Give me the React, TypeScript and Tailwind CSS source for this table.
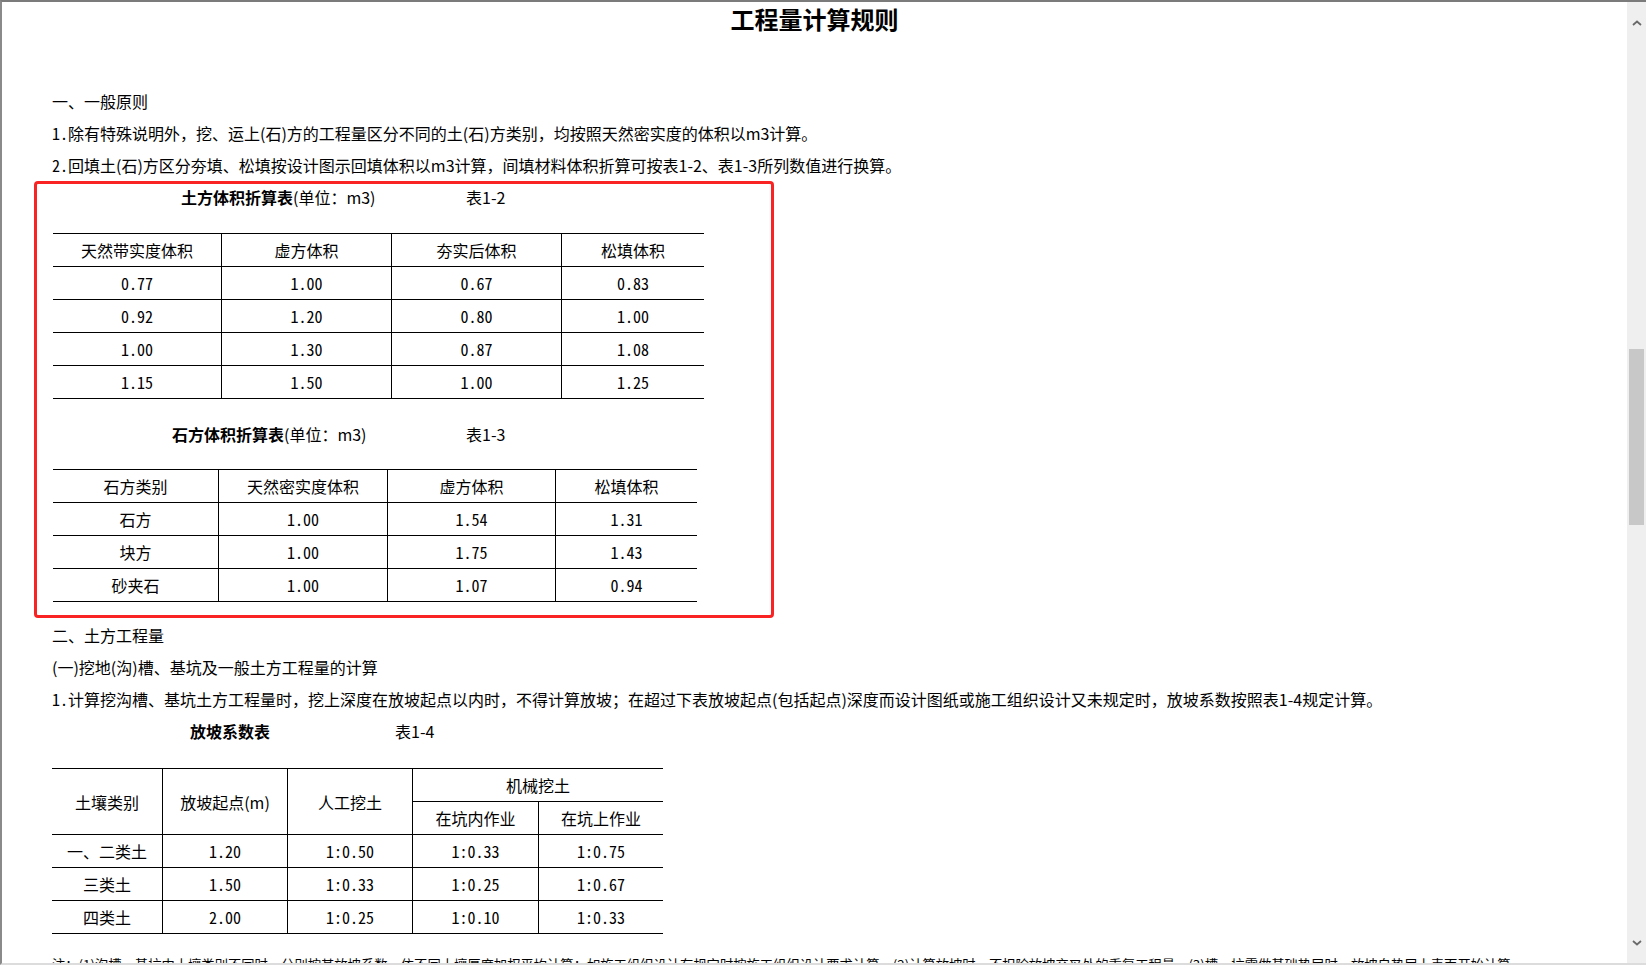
import React from "react";

type Cell = { text: string; w: string };

function TRow({ cells }: { cells: Cell[] }) {
  return (
    <div className="flex h-[33px] border-b border-black">
      {cells.map((c, i) => (
        <div
          key={i}
          className={
            c.w +
            " h-full flex items-center justify-center shrink-0" +
            (i > 0 ? " border-l border-black" : "") +
            (/^[0-9]/.test(c.text) ? " [font-feature-settings:'hwid']" : "")
          }
        >
          {c.text}
        </div>
      ))}
    </div>
  );
}

function SimpleTable({
  widths,
  tableW,
  header,
  rows,
}: {
  widths: string[];
  tableW: string;
  header: string[];
  rows: string[][];
}) {
  return (
    <div className={tableW + " border-t border-black"}>
      <TRow cells={header.map((t, i) => ({ text: t, w: widths[i] }))} />
      {rows.map((r, ri) => (
        <TRow key={ri} cells={r.map((t, i) => ({ text: t, w: widths[i] }))} />
      ))}
    </div>
  );
}

function Chevron({ up }: { up: boolean }) {
  return (
    <svg width="10" height="6" viewBox="0 0 10 6">
      <path
        d={up ? "M1 5 L5 1.5 L9 5" : "M1 1 L5 4.5 L9 1"}
        fill="none"
        stroke="#6a6a6a"
        strokeWidth="1.8"
      />
    </svg>
  );
}

export default function App() {
  const t1Widths = ["w-[168px]", "w-[170px]", "w-[170px]", "w-[143px]"];
  const t2Widths = ["w-[165px]", "w-[169px]", "w-[168px]", "w-[142px]"];
  const t3Widths = ["w-[110px]", "w-[125px]", "w-[125px]", "w-[126px]", "w-[125px]"];
  const hw = "[font-feature-settings:'hwid']";

  return (
    <div className="w-[1646px] h-[965px] bg-white border-t-2 border-l-2 border-b-2 border-t-[#7b7b7b] border-l-[#8a8a8a] border-b-[#dcdcdc] overflow-hidden flex text-black text-[16px] font-['Noto_Sans_CJK_SC',sans-serif]">
      <div className="flex-1 min-w-0 overflow-hidden">
        <div className="h-[34px] leading-[34px] text-center text-[24px] font-bold">工程量计算规则</div>

        <div className="mt-[50px] pl-[50px] h-[31px] leading-[31px]">一、一般原则</div>
        <div className="pl-[50px] h-[32px] leading-[32px] whitespace-nowrap">
          <span className={hw}>1.</span>除有特殊说明外，挖、运上(石)方的工程量区分不同的土(石)方类别，均按照天然密实度的体积以m3计算。
        </div>
        <div className="pl-[50px] h-[32px] leading-[32px] whitespace-nowrap">
          <span className={hw}>2.</span>回填土(石)方区分夯填、松填按设计图示回填体积以m3计算，间填材料体积折算可按表1-2、表1-3所列数值进行换算。
        </div>

        <div className="ml-[32px] w-[740px] h-[437px] border-[3px] border-[#fa2323] rounded-[4px]">
          <div className="h-[26px] leading-[26px] pl-[144px] flex whitespace-nowrap">
            <span className="w-[285px] shrink-0">
              <span className="font-bold">土方体积折算表</span>(单位：m3)
            </span>
            <span>表1-2</span>
          </div>
          <div className="mt-[23px] ml-[16px]">
            <SimpleTable
              widths={t1Widths}
              tableW="w-[651px]"
              header={["天然带实度体积", "虚方体积", "夯实后体积", "松填体积"]}
              rows={[
                ["0.77", "1.00", "0.67", "0.83"],
                ["0.92", "1.20", "0.80", "1.00"],
                ["1.00", "1.30", "0.87", "1.08"],
                ["1.15", "1.50", "1.00", "1.25"],
              ]}
            />
          </div>

          <div className="mt-[22px] h-[26px] leading-[26px] pl-[135px] flex whitespace-nowrap">
            <span className="w-[294px] shrink-0">
              <span className="font-bold">石方体积折算表</span>(单位：m3)
            </span>
            <span>表1-3</span>
          </div>
          <div className="mt-[22px] ml-[16px]">
            <SimpleTable
              widths={t2Widths}
              tableW="w-[644px]"
              header={["石方类别", "天然密实度体积", "虚方体积", "松填体积"]}
              rows={[
                ["石方", "1.00", "1.54", "1.31"],
                ["块方", "1.00", "1.75", "1.43"],
                ["砂夹石", "1.00", "1.07", "0.94"],
              ]}
            />
          </div>
        </div>

        <div className="mt-[1px] pl-[50px] h-[32px] leading-[32px]">二、土方工程量</div>
        <div className="pl-[50px] h-[32px] leading-[32px]">(一)挖地(沟)槽、基坑及一般土方工程量的计算</div>
        <div className="pl-[50px] h-[32px] leading-[32px] whitespace-nowrap">
          <span className={hw}>1.</span>计算挖沟槽、基坑土方工程量时，挖上深度在放坡起点以内时，不得计算放坡；在超过下表放坡起点(包括起点)深度而设计图纸或施工组织设计又未规定时，放坡系数按照表1-4规定计算。
        </div>
        <div className="h-[32px] leading-[32px] pl-[188px] flex whitespace-nowrap">
          <span className="w-[205px] shrink-0 font-bold">放坡系数表</span>
          <span>表1-4</span>
        </div>

        <div className="mt-[21px] ml-[50px] w-[611px] border-t border-black">
          <div className="flex h-[66px] border-b border-black">
            <div className="w-[110px] shrink-0 h-full flex items-center justify-center">土壤类别</div>
            <div className="w-[125px] shrink-0 h-full flex items-center justify-center border-l border-black">放坡起点(m)</div>
            <div className="w-[125px] shrink-0 h-full flex items-center justify-center border-l border-black">人工挖土</div>
            <div className="w-[251px] shrink-0 h-full flex flex-col border-l border-black">
              <div className="h-[33px] border-b border-black flex items-center justify-center">机械挖土</div>
              <div className="flex-1 flex">
                <div className="w-[125px] shrink-0 flex items-center justify-center">在坑内作业</div>
                <div className="w-[125px] shrink-0 flex items-center justify-center border-l border-black">在坑上作业</div>
              </div>
            </div>
          </div>
          {[
            ["一、二类土", "1.20", "1:0.50", "1:0.33", "1:0.75"],
            ["三类土", "1.50", "1:0.33", "1:0.25", "1:0.67"],
            ["四类土", "2.00", "1:0.25", "1:0.10", "1:0.33"],
          ].map((r, ri) => (
            <TRow key={ri} cells={r.map((t, i) => ({ text: t, w: t3Widths[i] }))} />
          ))}
        </div>

        <div className="mt-[16px] pl-[50px] h-[30px] leading-[30px] text-[13.3px] whitespace-nowrap">
          注：(1)沟槽、基坑中土壤类别不同时，分别按其放坡系数、依不同土壤厚度加权平均计算；如施工组织设计有规定时按施工组织设计要求计算。(2)计算放坡时，不扣除放坡交叉处的重复工程量。(3)槽、坑需做基础垫层时，放坡自垫层上表面开始计算。
        </div>
      </div>

      <div className="w-[19px] h-full bg-[#efefef] flex flex-col items-center shrink-0">
        <div className="h-[42px] w-full flex items-center justify-center">
          <Chevron up={true} />
        </div>
        <div className="mt-[305px] w-[15px] h-[176px] bg-[#c8c8c8]" />
        <div className="flex-1" />
        <div className="h-[40px] w-full flex items-center justify-center">
          <Chevron up={false} />
        </div>
      </div>
    </div>
  );
}
